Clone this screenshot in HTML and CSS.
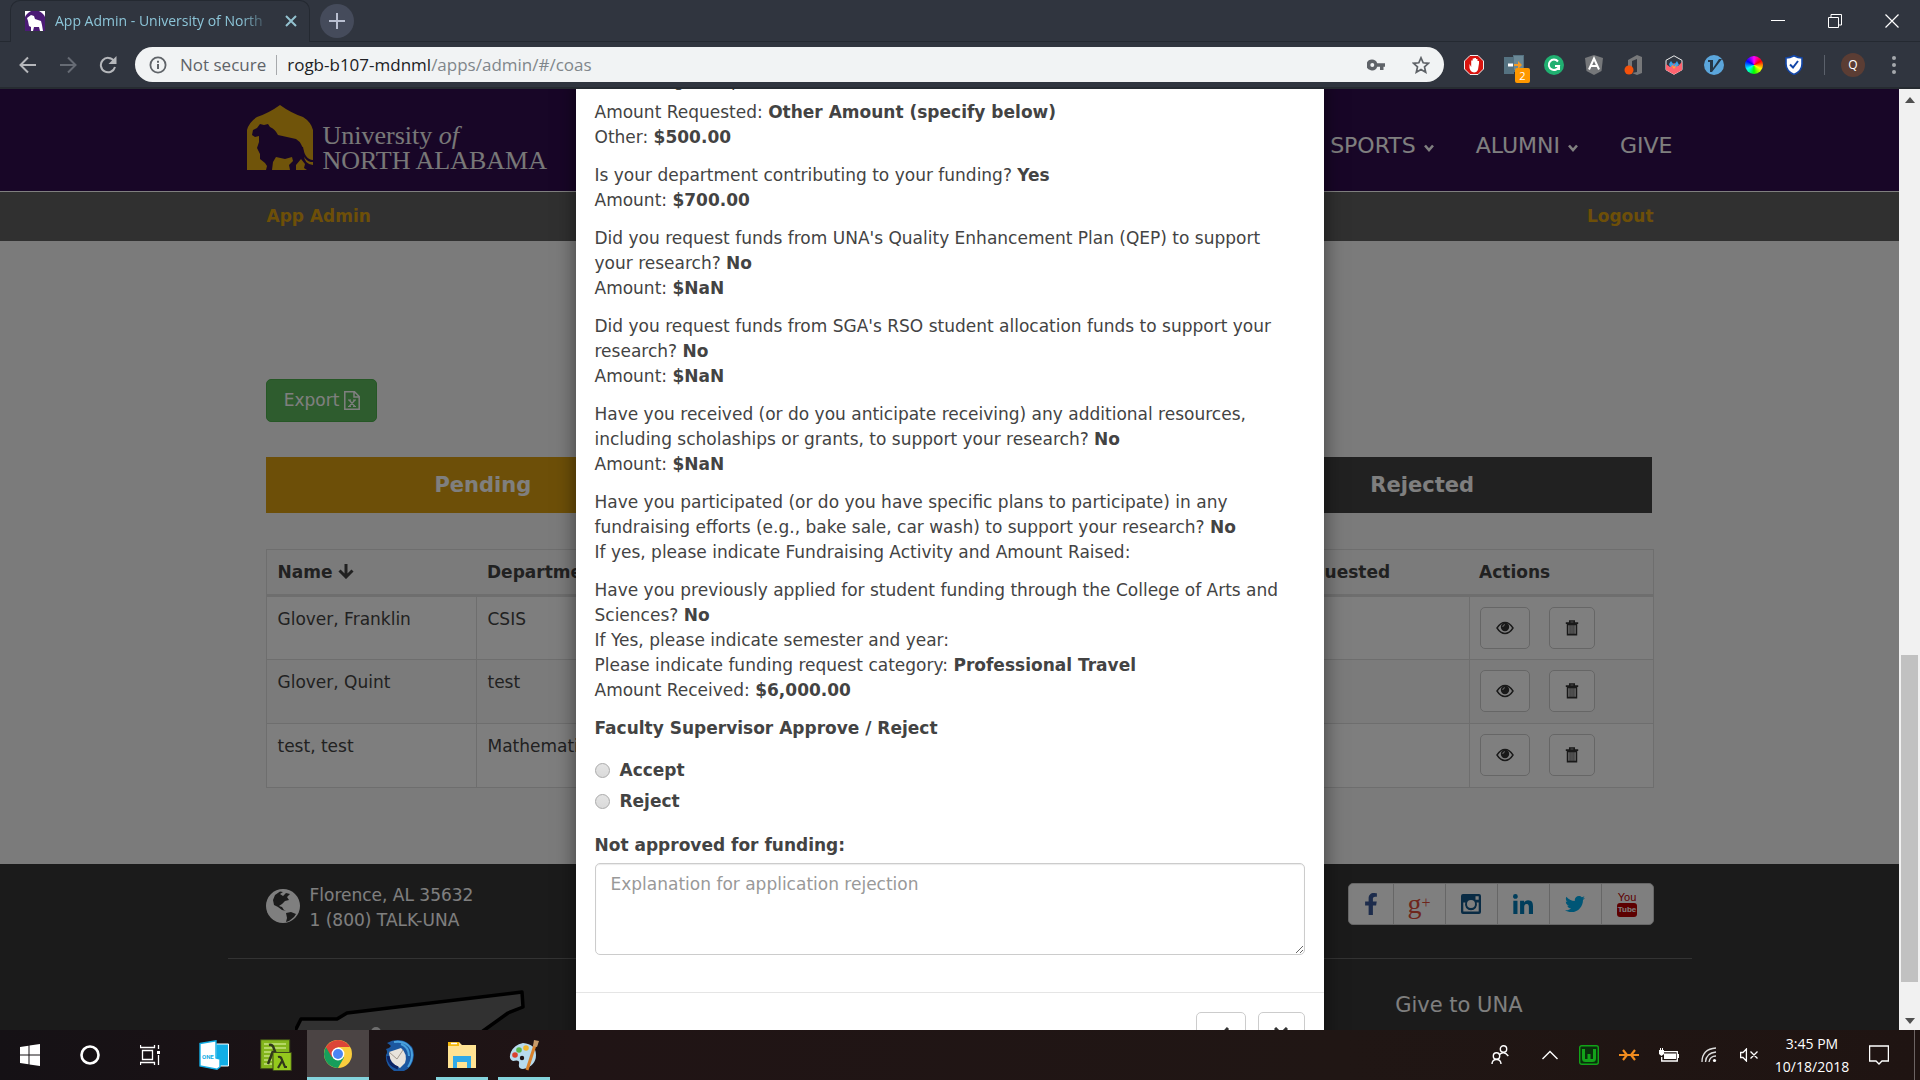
FILE: index.html
```html
<!DOCTYPE html>
<html lang="en">
<head>
<meta charset="utf-8">
<meta name="viewport" content="width=device-width, initial-scale=1">
<title>App Admin - University of North Alabama</title>
<link rel="stylesheet" href="styles.css">
</head>
<body>
<svg class="sprite" aria-hidden="true">
  <symbol id="i-eye" viewBox="0 0 18 14"><path d="M1 7Q4.500 1.500 9 1.500T17 7Q13.500 12.500 9 12.500T1 7Z" fill="none" stroke="currentColor" stroke-width="1.400"/><circle cx="9" cy="6" r="4.200" fill="currentColor"/><path d="M6.800 6Q6.800 3.800 9 3.700" fill="none" stroke="#fff" stroke-width=".8"/></symbol>
  <symbol id="i-trash" viewBox="0 0 14 18"><path d="M4.500 3V1.200h5V3M0 3.500h14M2 5v11.500h10V5z" fill="none" stroke="currentColor" stroke-width="1.800"/><path d="M4.800 5v11M7 5v11M9.200 5v11" stroke="currentColor" stroke-width="1.100"/></symbol>
  <symbol id="i-chev" viewBox="0 0 12 10"><path d="M2 2.500L6 7l4-4.500" fill="none" stroke="currentColor" stroke-width="2.600"/></symbol>
</svg>
<div class="screen">
  <header class="browser">
    <div class="tabstrip">
      <div class="tab">
        <svg class="favicon" viewBox="0 0 20 20"><rect width="20" height="20" fill="#fff"/><path d="M0 20V6Q1 3 6 0h8q5 3 6 6v14z" fill="#4b1b75"/><path d="M6 4L2 7l1 3 1 5 2 1v4h2l1-4h5l1 4h3l-1-6-1-4-6-2-1-3z" fill="#fff"/></svg>
        <span class="tab-title">App Admin - University of North</span>
        <button class="tab-close" aria-label="Close tab"><svg width="12" height="12" viewBox="0 0 12 12"><path d="M1 1l10 10M11 1L1 11" stroke="#93c1cf" stroke-width="2"/></svg></button>
      </div>
      <button class="newtab" aria-label="New tab"><svg width="16" height="16" viewBox="0 0 16 16"><path d="M8 0v16M0 8h16" stroke="#b9bfd0" stroke-width="2"/></svg></button>
      <div class="winctl">
        <button aria-label="Minimize"><svg width="14" height="14" viewBox="0 0 14 14"><path d="M0 6.500h14" stroke="#fff"/></svg></button>
        <button aria-label="Restore"><svg width="14" height="14" viewBox="0 0 14 14"><path d="M.5 3.500h10v10H.5zM3 3V.5h10.500v10.500H11" fill="none" stroke="#fff"/></svg></button>
        <button aria-label="Close"><svg width="14" height="14" viewBox="0 0 14 14"><path d="M.5.5l13 13M13.500.5l-13 13" stroke="#fff" stroke-width="1.200"/></svg></button>
      </div>
    </div>
    <div class="toolbar">
      <button class="nav-btn" aria-label="Back"><svg width="18" height="18" viewBox="0 0 18 18"><path d="M17 9H2M9 1.500L1.500 9 9 16.500" fill="none" stroke="#b5b7bb" stroke-width="2"/></svg></button>
      <button class="nav-btn" aria-label="Forward"><svg width="18" height="18" viewBox="0 0 18 18"><path d="M1 9h15M9 1.500L16.500 9 9 16.500" fill="none" stroke="#666b74" stroke-width="2"/></svg></button>
      <button class="nav-btn" aria-label="Reload"><svg width="18" height="18" viewBox="0 0 18 18"><path d="M15 5A7.200 7.200 0 1 0 16 11" fill="none" stroke="#b5b7bb" stroke-width="2"/><path d="M17.500 0v8h-8z" fill="#b5b7bb"/></svg></button>
      <div class="omnibox">
        <svg width="18" height="18" viewBox="0 0 18 18"><circle cx="9" cy="9" r="7.600" fill="none" stroke="#5f6368" stroke-width="1.800"/><path d="M9 8v5M9 4.800v2" stroke="#5f6368" stroke-width="2"/></svg>
        <span class="insecure">Not secure</span>
        <span class="url"><b>rogb-b107-mdnml</b>/apps/admin/#/coas</span>
        <svg width="18" height="12" viewBox="0 0 18 12"><path fill-rule="evenodd" d="M5 .5a5.500 5.500 0 1 0 5.200 7.300H13V11h3.500V7.800H18V4.200h-7.800A5.500 5.500 0 0 0 5 .5zM5.300 4a2 2 0 1 1 0 4 2 2 0 0 1 0-4z" fill="#5f6368"/></svg>
        <svg width="18" height="18" viewBox="0 0 18 18"><path d="M9 1.800l2.200 5 5.300.5-4 3.600 1.200 5.300L9 13.400l-4.700 2.800 1.200-5.300-4-3.600 5.300-.5z" fill="none" stroke="#5f6368" stroke-width="1.700"/></svg>
      </div>
      <div class="exts">
        <button aria-label="Ad blocker"><svg viewBox="0 0 20 20"><path d="M6 .5h8L19.500 6v8L14 19.500H6L.5 14V6z" fill="#d9140f" stroke="#eee"/><path d="M5.500 9v4q1 4 4.500 4.500 3 0 4-3L15 8.500V6h-1.500v4V4H12v5-6h-1.700v6V3.500H8.700V10 5.500H7.200V12z" fill="#fff"/></svg></button>
        <button class="has-badge" aria-label="Redirect, 2"><svg viewBox="0 0 20 20"><path d="M0 2h10v17H0zM9 0h11v17H9z" fill="#557281"/><path d="M10 1h9v14h-9z" fill="#6b8896"/><path d="M4 10h5" stroke="#fff" stroke-width="3"/><path d="M10 9h4V6l4 4-4 4v-3h-4z" fill="#f59a23"/></svg><span class="badge">2</span></button>
        <button aria-label="Grammar"><svg viewBox="0 0 20 20"><circle cx="10" cy="10" r="10" fill="#20b071"/><path d="M14 6.500A5.200 5.200 0 1 0 15 11h-4M15 11v4" fill="none" stroke="#fff" stroke-width="2"/></svg></button>
        <button aria-label="Angular"><svg viewBox="0 0 20 20"><path d="M10 0l9 3-1.500 13L10 20l-7.500-4L1 3z" fill="#75777a"/><path d="M5 14.500L10 3.500l5 11M7 11h6" fill="none" stroke="#fff" stroke-width="2"/></svg></button>
        <button aria-label="Office"><svg viewBox="0 0 20 20"><path d="M4 5l9-5 5 2v16l-5 2-5-2 5-1V4L8 6v6H4z" fill="#77787a"/><circle cx="5" cy="15" r="4.500" fill="#f4510b"/></svg></button>
        <button aria-label="Chart"><svg viewBox="0 0 20 20"><path d="M10 .8l8 4.500v9.500l-8 4.500-8-4.500V5.300z" fill="#303640" stroke="#eee"/><path d="M2 9l4 3 4-4 4 3 4-4v8l-8 4.500L2 15z" fill="#ff6470"/><path d="M5 9l2-3 3 4 3-4 2 4-3 2-3-2-3 2z" fill="#36a2eb"/><path d="M7 9l3 3 3-3-3 5z" fill="#ffb42e"/></svg></button>
        <button aria-label="Vim keys"><svg viewBox="0 0 20 20"><circle cx="10" cy="10" r="10" fill="#5ba6dc"/><path d="M4 5h5v2L9 13l6-9h3L8 17H6V7H4z" fill="#263747"/></svg></button>
        <button aria-label="Colour picker"><span class="wheel"></span></button>
        <button aria-label="Shield"><svg viewBox="0 0 20 20"><path d="M10 .8Q14 3 18 3v6q0 7-8 10.500Q2 16 2 9V3q4 0 8-2.200z" fill="#fff" stroke="#1246a8" stroke-width="1.600"/><path d="M6 9.500L9 12.500 14 6" fill="none" stroke="#1246a8" stroke-width="2"/></svg></button>
      </div>
      <button class="avatar">Q</button>
      <button class="menu" aria-label="Menu"><svg width="4" height="18" viewBox="0 0 4 18"><g fill="#a5a8ad"><circle cx="2" cy="2" r="2"/><circle cx="2" cy="9" r="2"/><circle cx="2" cy="16" r="2"/></g></svg></button>
    </div>
  </header>

  <main class="viewport">
    <div class="site">
      <div class="masthead">
        <div class="container masthead-row">
          <a class="brand" href="#">
            <svg width="66" height="65" viewBox="0 0 66 65"><path d="M0 65V25Q2 17 10 12Q22 8 33 0Q44 8 56 12Q64 17 66 25V65Z" fill="#e0a814"/><path d="M21 19L17 20 13 19 10 23 6 25 5 30 8 32 12 31 12 37 10 43 13 49 13 54 18 58 20 61 19 65H25L26 57 29 52 38 54 45 52 46 56 42 60 43 65H49L49 60 54 54 58 59 57 63 60 65H66V60Q57 59 57 50Q56 38 49 34Q40 32 31 30Q28 24 23 22Z" fill="#310c4f"/><path d="M55 42Q57 56 66 56" fill="none" stroke="#310c4f" stroke-width="2"/></svg>
            <span class="brand-text"><span>University <i>of</i></span><span>NORTH ALABAMA</span></span>
          </a>
          <nav class="topnav">
            <a href="#">SPORTS <svg width="12" height="10"><use href="#i-chev"/></svg></a>
            <a href="#">ALUMNI <svg width="12" height="10"><use href="#i-chev"/></svg></a>
            <a href="#">GIVE</a>
          </nav>
        </div>
      </div>
      <div class="subbar"><div class="container subbar-row"><a href="#">App Admin</a><a href="#">Logout</a></div></div>
      <section class="container content">
        <button class="export">Export <svg width="16" height="19" viewBox="0 0 16 19"><path d="M.8.8h9.700l4.700 4.700v12.700H.8zM10 1v5h5" fill="none" stroke="#fff" stroke-width="1.500"/><path d="M5 9l6 6.500M11 9l-6 6.500M4 9h3M9 9h3M4 15.500h3M9 15.500h3" stroke="#fff" stroke-width="1.200"/></svg></button>
        <div class="status"><button class="pending">Pending</button><button class="approved">Approved</button><button class="rejected">Rejected</button></div>
        <table class="apps">
          <colgroup><col class="c-name"><col class="c-dept"><col class="c-amount"><col class="c-actions"></colgroup>
          <thead><tr><th>Name <svg width="16" height="15" viewBox="0 0 16 15"><path d="M8 0v12M1.500 6.500L8 13l6.500-6.500" fill="none" stroke="currentColor" stroke-width="3"/></svg></th><th>Department</th><th>Amount Requested</th><th>Actions</th></tr></thead>
          <tbody>
            <tr><td>Glover, Franklin</td><td>CSIS</td><td></td><td><div class="acts"><button aria-label="View"><svg width="18" height="14"><use href="#i-eye"/></svg></button><button aria-label="Delete"><svg width="14" height="16"><use href="#i-trash"/></svg></button></div></td></tr>
            <tr><td>Glover, Quint</td><td>test</td><td></td><td><div class="acts"><button aria-label="View"><svg width="18" height="14"><use href="#i-eye"/></svg></button><button aria-label="Delete"><svg width="14" height="16"><use href="#i-trash"/></svg></button></div></td></tr>
            <tr><td>test, test</td><td>Mathematics</td><td></td><td><div class="acts"><button aria-label="View"><svg width="18" height="14"><use href="#i-eye"/></svg></button><button aria-label="Delete"><svg width="14" height="16"><use href="#i-trash"/></svg></button></div></td></tr>
          </tbody>
        </table>
      </section>
      <footer class="foot">
        <div class="container foot-top">
          <svg width="34" height="34" viewBox="0 0 34 34"><circle cx="17" cy="17" r="17" fill="#fff"/><path d="M9 6L14 2.500 17 3 14 5 17 7 20 4 24 5 21 8 23 11 19 12 16 15 13 17 16 18 18 21 20 22 16 21 12 18 8 16 7 11zM20 24l5-1 5 2-2 3-5 4-3 1 1-4z" fill="#363636"/></svg>
          <address>Florence, AL 35632<br>1 (800) TALK-UNA</address>
          <div class="social">
            <a href="#" aria-label="Facebook"><svg width="14" height="22" viewBox="0 0 320 512"><path fill="#3b5998" d="M279.140 288l14.220-92.660h-88.910v-60.130c0-25.350 12.420-50.060 52.240-50.060h40.420V6.260S260.430 0 225.360 0c-73.220 0-121.080 44.380-121.080 124.720v70.620H22.890V288h81.390v224h100.170V288z"/></svg></a>
            <a href="#" aria-label="Google Plus"><span class="gplus">g<sup>+</sup></span></a>
            <a href="#" aria-label="Instagram"><svg width="20" height="20" viewBox="0 0 20 20"><path fill="#125688" fill-rule="evenodd" d="M2 0h16q2 0 2 2v16q0 2-2 2H2q-2 0-2-2V2Q0 0 2 0zM2.300 8.500v9h15.400v-9h-2a6 6 0 1 1-11.400 0zM14.500 2.300v3.500h3.200V2.300zM10 6a4 4 0 1 0 0 8 4 4 0 0 0 0-8z"/></svg></a>
            <a href="#" aria-label="LinkedIn"><svg width="20" height="20" viewBox="0 0 448 448"><path fill="#007bb6" d="M100.280 448H7.400V148.900h92.880zM53.790 108.100C24.090 108.100 0 83.500 0 53.800a53.790 53.790 0 0 1 107.580 0c0 29.700-24.100 54.300-53.790 54.300zM447.900 448h-92.680V302.400c0-34.700-.7-79.200-48.290-79.200-48.290 0-55.690 37.700-55.690 76.700V448h-92.780V148.900h89.080v40.800h1.300c12.400-23.500 42.690-48.300 87.880-48.300 94 0 111.280 61.900 111.280 142.300V448z"/></svg></a>
            <a href="#" aria-label="Twitter"><svg width="20" height="20" viewBox="0 0 512 512"><path fill="#00aced" d="M459.370 151.716c.325 4.548.325 9.097.325 13.645 0 138.720-105.583 298.558-298.558 298.558-59.452 0-114.680-17.219-161.137-47.106 8.447.974 16.568 1.299 25.340 1.299 49.055 0 94.213-16.568 130.274-44.832-46.132-.975-84.792-31.188-98.112-72.772 6.498.974 12.995 1.624 19.818 1.624 9.421 0 18.843-1.300 27.614-3.573-48.081-9.747-84.143-51.980-84.143-102.985v-1.299c13.969 7.797 30.214 12.670 47.431 13.319-28.264-18.843-46.781-51.005-46.781-87.391 0-19.492 5.197-37.360 14.294-52.954 51.655 63.675 129.300 105.258 216.365 109.807-1.624-7.797-2.599-15.918-2.599-24.040 0-57.828 46.782-104.934 104.934-104.934 30.213 0 57.502 12.670 76.670 33.137 23.715-4.548 46.456-13.320 66.599-25.340-7.798 24.366-24.366 44.833-46.132 57.827 21.117-2.273 41.584-8.122 60.426-16.243-14.292 20.791-32.161 39.308-52.628 54.253z"/></svg></a>
            <a href="#" aria-label="YouTube"><span class="yt">You<b>Tube</b></span></a>
          </div>
        </div>
        <div class="foot-bottom">
          <svg class="map" width="230" height="80" viewBox="0 0 230 80"><path d="M227 2L228 17 213 23 188 41 150 80H0V41L6 29H42L52 23Z" fill="#626262" stroke="#000" stroke-width="3.500" stroke-linejoin="round"/><circle cx="81" cy="42" r="5" fill="#ddd"/><text x="89" y="48" fill="#bbb" font-size="9" font-family="Lato, sans-serif">NASHVILLE</text></svg>
          <a href="#">Give to UNA</a>
        </div>
      </footer>
    </div>

    <div class="overlay">
      <div class="modal" role="dialog" aria-label="Application">
        <div class="modal-body">
          <p class="lead">Presenting Group:</p>
          <p>Amount Requested: <b>Other Amount (specify below)</b><br>Other: <b>$500.00</b></p>
          <p>Is your department contributing to your funding? <b>Yes</b><br>Amount: <b>$700.00</b></p>
          <p>Did you request funds from UNA's Quality Enhancement Plan (QEP) to support<br>your research? <b>No</b><br>Amount: <b>$NaN</b></p>
          <p>Did you request funds from SGA's RSO student allocation funds to support your<br>research? <b>No</b><br>Amount: <b>$NaN</b></p>
          <p>Have you received (or do you anticipate receiving) any additional resources,<br>including scholaships or grants, to support your research? <b>No</b><br>Amount: <b>$NaN</b></p>
          <p>Have you participated (or do you have specific plans to participate) in any<br>fundraising efforts (e.g., bake sale, car wash) to support your research? <b>No</b><br>If yes, please indicate Fundraising Activity and Amount Raised:</p>
          <p>Have you previously applied for student funding through the College of Arts and<br>Sciences? <b>No</b><br>If Yes, please indicate semester and year:<br>Please indicate funding request category: <b>Professional Travel</b><br>Amount Received: <b>$6,000.00</b></p>
          <p><b>Faculty Supervisor Approve / Reject</b></p>
          <div class="choices">
            <label><input type="radio" name="decision">Accept</label>
            <label><input type="radio" name="decision">Reject</label>
          </div>
          <label class="why" for="why">Not approved for funding:</label>
          <textarea id="why" placeholder="Explanation for application rejection"></textarea>
        </div>
        <div class="modal-foot">
          <button aria-label="Save"><svg width="18" height="14" viewBox="0 0 18 14"><path d="M1 7l5 5L16 1" fill="none" stroke="#333" stroke-width="3"/></svg></button>
          <button aria-label="Cancel"><svg width="14" height="14" viewBox="0 0 14 14"><path d="M1 1l12 12M13 1L1 13" stroke="#333" stroke-width="3"/></svg></button>
        </div>
      </div>
    </div>
    <div class="scrollbar"><i class="arrow up"></i><i class="above"></i><i class="thumb"></i><i class="below"></i><i class="arrow down"></i></div>
  </main>

  <footer class="taskbar">
    <div class="sys">
      <button aria-label="Start"><svg width="20" height="22" viewBox="0 0 20 22"><path d="M0 3l8.500-1.200v8.700H0zM9.500 1.600L20 0v10.500H9.500zM0 11.500h8.500v8.700L0 19zM9.500 11.500H20V22l-10.500-1.600z" fill="#fff"/></svg></button>
      <button aria-label="Search"><svg width="20" height="20" viewBox="0 0 20 20"><circle cx="10" cy="10" r="8.500" fill="none" stroke="#fff" stroke-width="2.600"/></svg></button>
      <button aria-label="Task view"><svg width="20" height="20" viewBox="0 0 20 20"><path d="M2.500 5.500h10v9h-10zM.5 0v2.500h14V0M.5 20v-2.500h14V20M18.500 0v4M18.500 10v10" fill="none" stroke="#fff" stroke-width="1.300"/><path d="M17 6h3v3h-3z" fill="#fff"/></svg></button>
    </div>
    <div class="pins">
      <button aria-label="ONE"><svg width="30" height="30" viewBox="0 0 30 30"><path d="M17 4h12.500v22H17z" fill="#12aee6" stroke="#fff"/><path d="M1 3.500L17 .8V18l4 1v8l-3 2.200L1 26z" fill="#fff" stroke="#12aee6" stroke-width="1.400"/><text x="3" y="19" font-size="6" font-weight="bold" fill="#12aee6" font-family="Roboto, sans-serif">ONE</text></svg></button>
      <button aria-label="Lambda"><svg width="32" height="32" viewBox="0 0 32 32"><path d="M.7.7h29v29H.7z" fill="#83b51d" stroke="#3d4a18"/><path d="M4 5h22M4 9h22M4 13h8M4 17h8M4 21h8M4 25h8" stroke="#c5e27d" stroke-width="1.300"/><path d="M9 6q4-1 5 4l4 10M13 12L8 25" fill="none" stroke="#30371b" stroke-width="2.500"/><path d="M13 13.500h18.300v18H13z" fill="#94c91d" stroke="#3d4a18"/><path d="M18 18q3-1 4 3l3 7h2M22 22l-4 7" fill="none" stroke="#30371b" stroke-width="2.200"/></svg></button>
      <button class="running current" aria-label="Chrome"><svg width="28" height="28" viewBox="0 0 28 28"><circle cx="14" cy="14" r="14" fill="#f9cd3d"/><path d="M14 14L1.900 7A14 14 0 0 0 14 28l6-10.500z" fill="#169e5b"/><path d="M1.900 7A14 14 0 0 1 26.100 7H14L8 17.500z" fill="#dc4537"/><circle cx="14" cy="14" r="6.400" fill="#fff"/><circle cx="14" cy="14" r="5" fill="#4a85f2"/></svg></button>
      <button aria-label="Thunderbird"><svg width="30" height="32" viewBox="0 0 30 32"><path d="M2 4Q10-1 19 2q10 4 10 14-1 12-10 16H9Q0 26 1 16q2-3 0-6 3 0 5-3-2-2-4-3z" fill="#1b57a0"/><path d="M9 3Q21 1 26 10q3 9-3 18M16 5q8 3 8 12" fill="none" stroke="#48a0dc" stroke-width="2"/><path d="M4 13l12-4q7 6 4 15l-5 5-10-6z" fill="#e8e3dc"/><path d="M4 13l8 7 6-9" fill="none" stroke="#a39a90"/><path d="M3 17q1 9 10 12" fill="none" stroke="#0c2464" stroke-width="3"/></svg></button>
      <button class="running" aria-label="File Explorer"><svg width="28" height="26" viewBox="0 0 28 26"><path d="M0 0h11l3 3h14v23H0z" fill="#ffe393"/><path d="M0 0h11v4H0z" fill="#f5b90e"/><path d="M3 1.500h6" stroke="#fff" stroke-width="1.500"/><path d="M5 26V14h18v12h-4v-6h-10v6z" fill="#2fa9e8"/></svg></button>
      <button class="running" aria-label="Paint"><svg width="30" height="32" viewBox="0 0 30 32"><path d="M14 4Q27 5 27 16T14 30Q9 30 10 25T4 22Q-1 20 2 13T14 4z" fill="#b7dbee"/><circle cx="6" cy="16" r="2.800" fill="#d9422e"/><circle cx="10" cy="11" r="2.800" fill="#59b54a"/><circle cx="17" cy="9" r="2.800" fill="#efb52b"/><circle cx="13" cy="19" r="2.200" fill="#1c1314"/><path d="M26 6l-8 25" stroke="#d8812c" stroke-width="3"/><path d="M24 7l1-6 5 1-2 6z" fill="#c69b6b"/></svg></button>
    </div>
    <div class="tray">
      <button class="w-people" aria-label="People"><svg width="18" height="20" viewBox="0 0 18 20"><g fill="none" stroke="#fff" stroke-width="1.400"><circle cx="12.500" cy="4" r="3.200"/><path d="M8 10q4.500-5 9.300 1"/><circle cx="5.500" cy="11" r="3.200"/><path d="M1 19q0-4.500 4.500-4.500T10 19"/></g></svg></button>
      <button class="w-up" aria-label="Hidden icons"><svg width="16" height="10" viewBox="0 0 16 10"><path d="M.5 9L8 1.500 15.500 9" fill="none" stroke="#fff" stroke-width="1.400"/></svg></button>
      <button class="w-tray" aria-label="W"><svg width="20" height="20" viewBox="0 0 20 20"><rect x=".7" y=".7" width="18.600" height="18.600" rx="2" fill="#0a2f0c" stroke="#12a318" stroke-width="1.400"/><path d="M4.500 4v9.500q0 2 2 2h7q2 0 2-2V4M10 9v6" fill="none" stroke="#13a31a" stroke-width="3"/></svg></button>
      <button class="w-tray" aria-label="Sync"><svg width="20" height="14" viewBox="0 0 20 14"><path d="M0 7h20M4 2l4 5-4 5M16 2l-4 5 4 5" fill="none" stroke="#f28c1e" stroke-width="2.200"/></svg></button>
      <button class="w-tray" aria-label="Battery"><svg width="20" height="14" viewBox="0 0 20 14"><path d="M4 3.700h14.300V13H2.700V9" fill="none" stroke="#fff" stroke-width="1.300"/><path d="M5 5.500h12V11H5zM18 6h2v4h-2zM0 2h5v4l-2.500 2L0 6zM1 0h1v2H1zM3 0h1v2H3z" fill="#fff"/></svg></button>
      <button class="w-tray" aria-label="Wi-Fi"><svg width="16" height="16" viewBox="0 0 16 16"><g fill="none" stroke="#ddd" stroke-width="1.300"><path d="M1 15Q1 2 15 1M4.500 15Q5 6 15 5M8 15q1-6 7-6"/></g><circle cx="13.500" cy="13.500" r="1.600" fill="#fff"/></svg></button>
      <button class="w-tray" aria-label="Muted"><svg width="18" height="14" viewBox="0 0 18 14"><path d="M.6 4.500H3L6.400 1v12L3 9.500H.6zM10.500 3.500l7 7M17.500 3.500l-7 7" fill="none" stroke="#fff" stroke-width="1.300"/></svg></button>
      <div class="clock"><span>3:45 PM</span><span>10/18/2018</span></div>
      <button class="w-note" aria-label="Notifications"><svg width="20" height="20" viewBox="0 0 20 20"><path d="M.6 1h18.800v15H13l-3 3-3-3H.6z" fill="none" stroke="#fff" stroke-width="1.300"/></svg></button>
    </div>
  </footer>
</div>
</body>
</html>
```
FILE: styles.css
```css
* { box-sizing: border-box; }
body { margin: 0; font: 17px/25px "DejaVu Sans", Verdana, sans-serif; color: #434343; }
button { margin: 0; padding: 0; border: 0; background: none; font: inherit; color: inherit; display: flex; align-items: center; justify-content: center; }
a { color: inherit; text-decoration: none; }
p { margin: 0 0 13px; }
svg { flex: none; }
.sprite { display: none; }
.screen { display: flex; flex-direction: column; height: 100vh; overflow: hidden; }

/* browser frame */
.browser { background: #30353f; border-bottom: 2px solid #262b31; font: 17px/20px "Open Sans", sans-serif; }
.tabstrip { display: flex; align-items: center; height: 42px; padding-left: 10px; border-bottom: 1px solid #242931; }
.tab { display: flex; align-items: center; width: 300px; height: 42px; padding: 0 8px 0 14px; gap: 10px; background: #30353f; border: 1px solid #242931; border-bottom: 0; border-radius: 10px 10px 0 0; font-size: 14px; color: #8cc5d8; }
.favicon { width: 20px; height: 20px; }
.tab-title { flex: 1; white-space: nowrap; -webkit-mask-image: linear-gradient(to right, #000 86%, transparent); mask-image: linear-gradient(to right, #000 86%, transparent); }
.tab-close { width: 20px; height: 20px; }
.newtab { width: 34px; height: 34px; margin-left: 10px; border-radius: 50%; background: #454b5b; }
.winctl { display: flex; margin-left: auto; height: 36px; }
.winctl button { width: 57px; }
.toolbar { display: flex; align-items: center; height: 45px; padding: 0 19px 0 8px; }
.nav-btn { width: 40px; height: 36px; }
.omnibox { flex: 1; display: flex; align-items: center; height: 35px; margin-left: 7px; padding: 0 14px; border-radius: 18px; background: #f1f3f4; }
.insecure { padding: 0 10px 0 13px; color: #5f6368; border-right: 1px solid #a7a9ac; }
.url { flex: 1; padding-left: 10px; color: #80868b; }
.url b { font-weight: 400; color: #202124; }
.omnibox > svg + svg { margin-left: 27px; }
.exts { display: flex; margin-left: 10px; padding-right: 10px; border-right: 1px solid #5b616b; }
.exts button { width: 40px; height: 20px; }
.exts svg { width: 20px; height: 20px; }
.has-badge { position: relative; }
.badge { position: absolute; left: 21px; top: 13px; width: 15px; height: 15px; border-radius: 2px; background: #ff9800; color: #fff; font-size: 11px; line-height: 15px; }
.wheel { width: 18px; height: 18px; border-radius: 50%; background: conic-gradient(#f0f, #f00, #ff0, #0f0, #0ff, #00f, #f0f); }
.avatar { width: 24px; height: 24px; margin: 0 22px 0 16px; border-radius: 50%; background: #5b3d34; color: #fff; font-size: 12px; }
.menu { width: 14px; height: 24px; }

/* page under the dialog */
.viewport { position: relative; flex: 1; min-height: 0; overflow: hidden; }
.site { background: #f7f7f7; }
.container { width: 76.2%; margin: 0 auto; padding: 0 38px; }
.masthead { background: #310c4f; border-bottom: 1px solid #fff; }
.masthead-row { display: flex; align-items: center; justify-content: space-between; height: 102px; padding: 0 19px; }
.brand { display: flex; align-items: flex-end; gap: 9px; padding-bottom: 6px; }
.brand-text { display: flex; flex-direction: column; margin-bottom: -3px; color: #f0f0f0; font: 26px/25px "Liberation Serif", serif; }
.topnav { display: flex; gap: 41px; color: #fff; font-size: 22px; padding-top: 10px; }
.subbar { background: #606060; }
.subbar-row { display: flex; justify-content: space-between; height: 49px; line-height: 48px; font-weight: 700; color: #db9f11; }
.content { padding-top: 138px; padding-bottom: 76px; }
.export { gap: 5px; width: 111px; height: 43px; border: 1px solid #4cae4c; border-radius: 5px; background: #5cb85c; color: #fff; }
.status { display: grid; grid-template-columns: 432fr 493fr 458fr; margin: 35px 2px 36px 0; }
.status button { height: 56px; color: #fff; font-size: 21px; font-weight: 700; }
.pending { background: #db9f11; }
.approved { background: #310c4f; }
.rejected { background: #434343; }
.apps { width: 100%; table-layout: fixed; border-collapse: collapse; border: 1px solid #ddd; }
.c-name { width: 210px; }
.c-amount { width: 272px; }
.c-actions { width: 184px; }
.apps th { height: 46px; padding: 0 10px; border-bottom: 3px solid #ddd; text-align: left; }
.apps th svg { vertical-align: -1px; }
.apps td { height: 64px; padding: 10px; border: 1px solid #ddd; vertical-align: top; }
.apps tbody tr:nth-child(odd) { background: #fcfcfc; }
.acts { display: flex; gap: 19px; color: #333; }
.acts button { width: 50px; height: 42px; border: 1px solid #ccc; border-radius: 5px; background: #fff; }
.acts button + button { width: 46px; }
.foot { background: #363636; color: #fff; }
.foot-top { display: flex; align-items: flex-start; height: 94px; padding-top: 19px; }
.foot-top > svg { margin-top: 6px; }
address { margin-left: 9px; font-style: normal; }
.social { display: flex; margin-left: auto; border: 1px solid #ccc; border-radius: 5px; background: #fff; overflow: hidden; }
.social a { display: flex; align-items: center; justify-content: center; width: 52px; height: 40px; border-left: 1px solid #ccc; }
.social a:first-child { width: 44px; border: 0; }
.gplus { color: #dd4b39; font: 28px/32px "Liberation Serif", serif; }
.gplus sup { font-size: 16px; line-height: 10px; vertical-align: 5px; }
.yt { display: flex; flex-direction: column; align-items: center; color: #b00; font: 11px/11px "Liberation Sans", sans-serif; }
.yt b { padding: 1px 1px 2px; border-radius: 3px; background: #b00; color: #fff; font-size: 8px; }
.foot-bottom { display: flex; justify-content: space-between; width: 76.2%; margin: 0 auto; padding: 31px 169px 0 67px; border-top: 1px solid #666; font-size: 21px; }
.foot-bottom a { padding-top: 3px; }

/* dialog */
.overlay { position: absolute; inset: 0 21px 0 0; overflow: hidden; background: rgba(0, 0, 0, .5); }
.modal { width: 748px; margin: -21px auto 0; background: #fff; box-shadow: 0 6px 19px rgba(0, 0, 0, .5); }
.modal-body { padding: 0 19px 37px; }
.modal .lead { margin-bottom: 7px; }
.choices { display: flex; flex-direction: column; gap: 6px; padding: 4px 0 19px; font-weight: 700; }
.choices label { display: flex; align-items: center; gap: 10px; }
.choices input { appearance: none; width: 15px; height: 15px; margin: 0; border: 1px solid #aaa; border-radius: 50%; background: linear-gradient(#e4e4e4, #dadada); }
.why { display: block; margin-bottom: 5px; font-weight: 700; }
textarea { display: block; width: 100%; height: 92px; padding: 8px 15px; border: 1px solid #ccc; border-radius: 5px; box-shadow: inset 0 1px 1px rgba(0, 0, 0, .08); font: inherit; resize: vertical; }
textarea::placeholder { color: #999; }
.modal-foot { display: flex; justify-content: flex-end; gap: 12px; padding: 19px; border-top: 1px solid #e5e5e5; }
.modal-foot button { width: 50px; height: 44px; border: 1px solid #ccc; border-radius: 5px; }
.modal-foot button + button { width: 47px; }

.scrollbar { position: absolute; inset: 0 0 0 auto; display: flex; flex-direction: column; width: 21px; padding: 0 2px; background: #f1f1f1; }
.arrow { width: 0; margin: 8px auto 6px; border: 5px solid transparent; }
.up { border-top-width: 0; border-bottom: 6px solid #505050; }
.down { border-bottom-width: 0; border-top: 6px solid #505050; }
.above { flex: 546; }
.thumb { flex: 327; background: #c1c1c1; }
.below { flex: 28; }

/* taskbar */
.taskbar { display: flex; height: 50px; background: linear-gradient(to right, #151115, #201415 30%, #201614 70%, #1f1412); color: #fff; }
.sys, .pins, .tray { display: flex; }
.sys button { width: 60px; }
.pins { gap: 10px; padding-left: 8px; }
.pins button { width: 52px; border: solid transparent; border-width: 3px 0; }
.pins .running { border-bottom-color: #84d3dc; }
.pins .current { width: 62px; margin: 0 -5px; border-top: 0; background: #4b4444; }
.tray { margin-left: auto; margin-right: 5px; padding-right: 11px; border-right: 1px solid #6c6463; }
.w-people { width: 62px; }
.w-up { width: 38px; }
.w-tray { width: 40px; }
.clock { display: flex; flex-direction: column; justify-content: center; align-items: center; width: 86px; font: 14px/23px "Open Sans", sans-serif; }
.w-note { width: 48px; }
```
